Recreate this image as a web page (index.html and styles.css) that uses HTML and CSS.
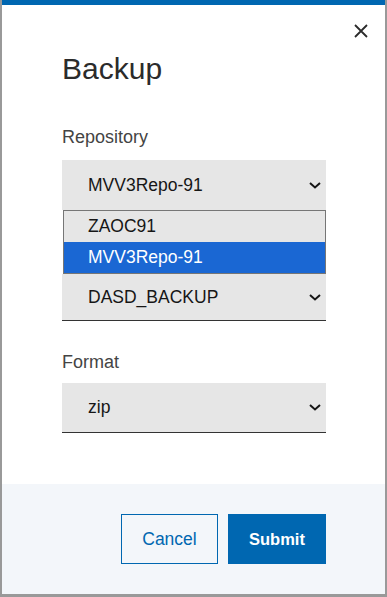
FILE: index.html
```html
<!DOCTYPE html>
<html lang="en">
  <head>
    <meta charset="UTF-8" />
    <meta name="viewport" content="width=device-width, initial-scale=1.0" />
    <title>Backup</title>
    <link rel="stylesheet" href="styles.css">
  </head>
  <body>
    <div class="modal">
      <button class="close-btn" aria-label="Close">
        <svg width="14" height="14" viewBox="0 0 14 14">
          <path d="M1 1 L13 13 M13 1 L1 13" stroke="#2b2b2b" stroke-width="1.8" fill="none" />
        </svg>
      </button>

      <div class="modal-body">
        <h1>Backup</h1>

        <div class="field">
          <label>Repository</label>
          <div class="select open">
            <span>MVV3Repo-91</span>
            <svg class="chevron" width="12" height="7" viewBox="0 0 12 7">
              <path d="M1 1 L6 5.5 L11 1" stroke="#161616" stroke-width="2" fill="none" />
            </svg>
          </div>
          <ul class="listbox">
            <li>ZAOC91</li>
            <li class="selected">MVV3Repo-91</li>
          </ul>
          <div class="select short">
            <span>DASD_BACKUP</span>
            <svg class="chevron" width="12" height="7" viewBox="0 0 12 7">
              <path d="M1 1 L6 5.5 L11 1" stroke="#161616" stroke-width="2" fill="none" />
            </svg>
          </div>
        </div>

        <div class="field format">
          <label>Format</label>
          <div class="select">
            <span>zip</span>
            <svg class="chevron" width="12" height="7" viewBox="0 0 12 7">
              <path d="M1 1 L6 5.5 L11 1" stroke="#161616" stroke-width="2" fill="none" />
            </svg>
          </div>
        </div>
      </div>

      <div class="modal-footer">
        <button class="btn btn-secondary">Cancel</button>
        <button class="btn btn-primary">Submit</button>
      </div>
    </div>
  </body>
</html>
```

FILE: styles.css
```css
* {
  margin: 0;
  padding: 0;
  box-sizing: border-box;
}

body {
  font-family: "Liberation Sans", Arial, sans-serif;
  background: #999999;
  height: 597px;
  padding: 0 2px 3px 2px;
}

.modal {
  position: relative;
  background: #ffffff;
  border-top: 5px solid #0067b1;
  height: 594px;
  display: flex;
  flex-direction: column;
}

.close-btn {
  position: absolute;
  top: 19px;
  right: 17px;
  width: 14px;
  height: 14px;
  border: none;
  background: none;
  display: flex;
}

.modal-body {
  flex: 1;
  padding: 46px 59px 0 60px;
}

.modal-body h1 {
  font-size: 30px;
  font-weight: 400;
  line-height: 36px;
  color: #2b2b2b;
}

.field {
  margin-top: 39px;
}

.field.format {
  margin-top: 30px;
}

.field label {
  display: block;
  font-size: 18px;
  line-height: 22px;
  color: #444444;
  margin-bottom: 12px;
}

.field.format label {
  margin-bottom: 10px;
}

.select {
  height: 50px;
  background: #e6e6e6;
  border-bottom: 1px solid #333333;
  display: flex;
  align-items: center;
  justify-content: space-between;
  padding: 0 5px 0 26px;
  font-size: 17.5px;
  color: #161616;
}

.select.open {
  border-bottom: none;
}

.select.short {
  height: 47px;
}

.chevron {
  display: block;
}

.listbox {
  list-style: none;
  border: 1px solid #767676;
  background: #e6e6e6;
  margin-left: 1px;
}

.listbox li {
  height: 31px;
  line-height: 31px;
  padding-left: 24px;
  font-size: 17.5px;
  color: #161616;
}

.listbox li.selected {
  background: #1a67d3;
  color: #ffffff;
}

.modal-footer {
  height: 110px;
  background: #f3f6fa;
  display: flex;
  justify-content: flex-end;
  align-items: flex-start;
  gap: 10px;
  padding: 30px 59px 0 0;
}

.btn {
  height: 50px;
  font-family: "Liberation Sans", Arial, sans-serif;
  font-size: 17.5px;
  cursor: pointer;
}

.btn-secondary {
  width: 97px;
  background: transparent;
  border: 1px solid #0067b1;
  color: #0067b1;
}

.btn-primary {
  width: 98px;
  background: #0067b1;
  border: none;
  color: #ffffff;
  font-size: 16.5px;
  font-weight: 700;
}
```
